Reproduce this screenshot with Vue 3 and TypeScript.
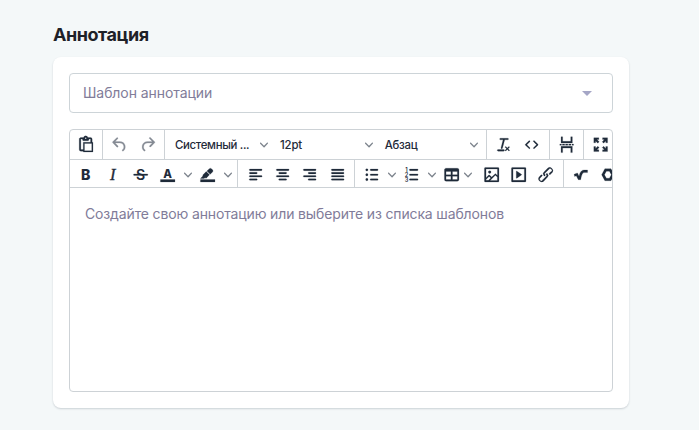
<script setup lang="ts">
interface Tool {
  icon: string
  arrow?: boolean
  muted?: boolean
  compact?: boolean
}

const selects: string[] = ['Системный ...', '12pt', 'Абзац']

const rowTwo: Tool[][] = [
  [{ icon: 'bold' }, { icon: 'italic' }, { icon: 'strike' }, { icon: 'color', arrow: true }, { icon: 'highlight', arrow: true }],
  [{ icon: 'left' }, { icon: 'center' }, { icon: 'right' }, { icon: 'justify' }],
  [
    { icon: 'bullets', arrow: true },
    { icon: 'numbers', arrow: true },
    { icon: 'table', arrow: true, compact: true },
    { icon: 'image' },
    { icon: 'media' },
    { icon: 'link' },
  ],
  [{ icon: 'root' }, { icon: 'chem' }],
]

const rowOneStart: Tool[][] = [[{ icon: 'paste' }], [{ icon: 'undo', muted: true }, { icon: 'redo', muted: true }]]
const rowOneEnd: Tool[][] = [[{ icon: 'clear' }, { icon: 'code' }], [{ icon: 'break' }], [{ icon: 'fullscreen' }]]

const paths: Record<string, string> = {
  paste:
    'M18 9V5h-2v1c0 .6-.4 1-1 1H9a1 1 0 01-1-1V5H6v13h3V9h9zM9 20H6a2 2 0 01-2-2V5c0-1.1.9-2 2-2h3.2A3 3 0 0112 1a3 3 0 012.8 2H18a2 2 0 012 2v4h1v12H9v-1zm1.5-9.5v9h9v-9h-9zM12 3a1 1 0 00-1 1c0 .5.4 1 1 1s1-.5 1-1-.4-1-1-1z',
  undo: 'M6.4 8H12c3.7 0 6.2 2 6.8 5.1.6 2.7-.4 5.6-2.3 6.8a1 1 0 01-1-1.8c1.1-.6 1.8-2.7 1.4-4.6-.5-2.1-2.1-3.5-4.9-3.5H6.4l3.3 3.3a1 1 0 11-1.4 1.4l-5-5a1 1 0 010-1.4l5-5a1 1 0 011.4 1.4L6.4 8z',
  redo: 'M17.6 10H12c-2.8 0-4.4 1.4-4.9 3.5-.4 2 .3 4 1.4 4.6a1 1 0 11-1 1.8c-2-1.2-2.9-4.1-2.3-6.8.6-3 3-5.1 6.8-5.1h5.6l-3.3-3.3a1 1 0 111.4-1.4l5 5a1 1 0 010 1.4l-5 5a1 1 0 01-1.4-1.4l3.3-3.3z',
  code: 'M9.8 15.7c.3.3.3.8 0 1-.3.4-.9.4-1.2 0l-4.4-4.1a.8.8 0 010-1.2l4.4-4.2c.3-.3.9-.3 1.2 0 .3.3.3.8 0 1.1L6 12l3.8 3.7zM14.2 15.7c-.3.3-.3.8 0 1 .4.4.9.4 1.2 0l4.4-4.1c.3-.3.3-.9 0-1.2l-4.4-4.2a.8.8 0 00-1.2 0c-.3.3-.3.8 0 1.1L18 12l-3.8 3.7z',
  clear:
    'M13.2 6a1 1 0 010 .2l-2.6 10a1 1 0 01-1 .8h-.2a.8.8 0 01-.8-1l2.6-10H8a1 1 0 110-2h9a1 1 0 010 2h-3.8zM5 18h7a1 1 0 010 2H5a1 1 0 010-2zm13 1.5L16.5 18 15 19.5a.7.7 0 01-1-1l1.5-1.5-1.5-1.5a.7.7 0 011-1l1.5 1.5 1.5-1.5a.7.7 0 011 1L17.5 17l1.5 1.5a.7.7 0 01-1 1z',
  break:
    'M5 2.2h2v5.6h10V2.2h2v7.8H5zM5 21.8h2v-5.6h10v5.6h2V14H5zM3.5 11.200h2v1.600h-2zM6.700 11.200h2.800v1.600H6.700zM10.600 11.200h2.800v1.600h-2.800zM14.500 11.200h2.800v1.600h-2.800zM18.500 11.200h2v1.600h-2z',
  fullscreen:
    'M3.500 3.500h6.200v2.200H7.400l2.700 2.700-1.700 1.700-2.700-2.700v2.300H3.500zM20.500 3.500v6.200h-2.200V7.400l-2.700 2.700-1.700-1.700 2.700-2.700h-2.300V3.500zM20.500 20.500h-6.200v-2.200h2.300l-2.700-2.700 1.700-1.700 2.700 2.700v-2.300h2.200zM3.500 20.500v-6.200h2.200v2.300l2.700-2.700 1.700 1.700-2.700 2.700h2.300v2.200z',
  strike: 'M4 11h16a1 1 0 010 2H4a1 1 0 010-2z',
  color: 'M3 18h18v3H3z',
  highlight:
    'M3 18h18v3H3zM7.7 16.7H3l3.3-3.3-.7-.8L10.2 8l4 4.1-4 4.2c-.2.2-.6.2-.8 0l-.6-.7-1.1 1.1zm3.300-9.300l3-2.900a2 2 0 012.6 0L18 6c.7.7.7 2 0 2.7l-2.9 2.9z',
  left: 'M5 5h14a1 1 0 010 2H5a1 1 0 110-2zm0 4h8a1 1 0 010 2H5a1 1 0 110-2zm0 8h8a1 1 0 010 2H5a1 1 0 010-2zm0-4h14a1 1 0 010 2H5a1 1 0 010-2z',
  center: 'M5 5h14a1 1 0 010 2H5a1 1 0 110-2zm3 4h8a1 1 0 010 2H8a1 1 0 110-2zm0 8h8a1 1 0 010 2H8a1 1 0 010-2zm-3-4h14a1 1 0 010 2H5a1 1 0 010-2z',
  right: 'M5 5h14a1 1 0 010 2H5a1 1 0 110-2zm6 4h8a1 1 0 010 2h-8a1 1 0 110-2zm0 8h8a1 1 0 010 2h-8a1 1 0 010-2zm-6-4h14a1 1 0 010 2H5a1 1 0 010-2z',
  justify: 'M5 5h14a1 1 0 010 2H5a1 1 0 110-2zm0 4h14a1 1 0 010 2H5a1 1 0 110-2zm0 4h14a1 1 0 010 2H5a1 1 0 010-2zm0 4h14a1 1 0 010 2H5a1 1 0 010-2z',
  bullets:
    'M11 5h8a1 1 0 010 2h-8a1 1 0 010-2zm0 6h8a1 1 0 010 2h-8a1 1 0 010-2zm0 6h8a1 1 0 010 2h-8a1 1 0 010-2zM4.5 6a1.5 1.5 0 113 0 1.5 1.5 0 01-3 0zm0 6a1.5 1.5 0 113 0 1.5 1.5 0 01-3 0zm0 6a1.5 1.5 0 113 0 1.5 1.5 0 01-3 0z',
  numbers: 'M10 5h9a1 1 0 010 2h-9a1 1 0 010-2zm0 6h9a1 1 0 010 2h-9a1 1 0 010-2zm0 6h9a1 1 0 010 2h-9a1 1 0 010-2z',
  table: 'M19 4a2 2 0 012 2v12a2 2 0 01-2 2H5a2 2 0 01-2-2V6c0-1.1.9-2 2-2h14zM5 14v4h6v-4H5zm14 0h-6v4h6v-4zm0-6h-6v4h6V8zM5 12h6V8H5v4z',
  image:
    'M5 15.7l3.3-3.2c.3-.3.7-.3 1 0L12 15l4.1-4c.3-.4.8-.4 1 0l2 1.9V5H5v10.7zM5 18V19h3l2.8-2.9-2-2L5 17.9zm14-3l-2.5-2.4-6.4 6.5H19v-4zM4 3h16c.6 0 1 .4 1 1v16c0 .6-.4 1-1 1H4a1 1 0 01-1-1V4c0-.6.4-1 1-1zm5.5 7.5a1.7 1.7 0 100-3.4 1.7 1.7 0 000 3.4z',
  media:
    'M4 3h16c.6 0 1 .4 1 1v16c0 .6-.4 1-1 1H4a1 1 0 01-1-1V4c0-.6.4-1 1-1zm1 2v14h14V5H5zm4.8 2.6l5.6 4a.5.5 0 010 .8l-5.6 4A.5.5 0 019 16V8a.5.5 0 01.8-.4z',
  link: 'M6.2 12.3a1 1 0 011.4 1.4l-2.1 2a2 2 0 102.7 2.8l4.8-4.8a1 1 0 000-1.4 1 1 0 111.4-1.3 2.9 2.9 0 010 4L9.6 20a3.9 3.9 0 01-5.5-5.5l2-2zm11.6-.6a1 1 0 01-1.4-1.4l2-2a2 2 0 10-2.6-2.8L11 10.3a1 1 0 000 1.4A1 1 0 119.6 13a2.9 2.9 0 010-4L14.4 4a3.9 3.9 0 015.500 5.500l-2 2z',
  root: 'M3.800 11.500L8 9.800l2 4.200C11 9 12.800 6.200 16 6.200h4.500v3.200h-4c-2.300 0-3.300 3.200-4.500 8.800H9l-2.500-4.800-2 .8z',
  chem: 'M8.500 4.500h7.500L20.500 12 16 19.500H8.500L4.500 12zM10.400 7.700L8 12l2.400 4.300h3.700L16.500 12l-2.400-4.300z',
}

const letters: Record<string, string> = { bold: 'B', italic: 'I', strike: 'S', color: 'A' }
const chevron = 'M8.7 2.2c.3-.3.8-.3 1 0 .4.4.4.9 0 1.2L5.7 7.8c-.3.3-.9.3-1.2 0L.2 3.4a.8.8 0 010-1.2c.3-.3.8-.3 1.1 0L5 6l3.7-3.8z'
</script>

<template>
  <main class="page">
    <h2 class="title">Аннотация</h2>
    <section class="card">
      <div class="template-select">
        <span>Шаблон аннотации</span>
        <i class="caret"></i>
      </div>
      <div class="editor">
        <div class="row first">
          <div v-for="(group, g) in rowOneStart" :key="g" class="group">
            <span v-for="tool in group" :key="tool.icon" class="tool" :class="{ muted: tool.muted }">
              <svg viewBox="0 0 24 24" class="icon"><path :d="paths[tool.icon]" fill-rule="evenodd" /></svg>
            </span>
          </div>
          <div class="group selects">
            <span v-for="label in selects" :key="label" class="select">
              {{ label }}
              <svg viewBox="0 0 10 10" class="chevron"><path :d="chevron" /></svg>
            </span>
          </div>
          <div v-for="(group, g) in rowOneEnd" :key="'e' + g" class="group">
            <span v-for="tool in group" :key="tool.icon" class="tool">
              <svg viewBox="0 0 24 24" class="icon"><path :d="paths[tool.icon]" /></svg>
            </span>
          </div>
        </div>
        <div class="row second">
          <div v-for="(group, g) in rowTwo" :key="g" class="group">
            <template v-for="tool in group" :key="tool.icon">
              <span class="tool">
                <svg viewBox="0 0 24 24" class="icon">
                  <path v-if="paths[tool.icon]" :d="paths[tool.icon]" fill-rule="evenodd" />
                  <text v-if="letters[tool.icon]" x="12" :y="tool.icon === 'color' ? 15.7 : 18.3" :class="tool.icon">{{ letters[tool.icon] }}</text>
                  <g v-if="tool.icon === 'numbers'" class="digits">
                    <text x="5.5" y="8.5">1</text>
                    <text x="5.5" y="14.7">2</text>
                    <text x="5.5" y="21">3</text>
                  </g>
                </svg>
              </span>
              <span v-if="tool.arrow" class="arrow" :class="{ compact: tool.compact }">
                <svg viewBox="0 0 10 10" class="chevron"><path :d="chevron" /></svg>
              </span>
            </template>
          </div>
        </div>
        <div class="content">Создайте свою аннотацию или выберите из списка шаблонов</div>
      </div>
    </section>
  </main>
</template>

<style>
body {
  background: #f4f8f9;
}
</style>

<style scoped>
.page {
  box-sizing: border-box;
  height: 430px;
  padding: 22px 70px 0 53px;
  font-family: Inter, "Liberation Sans", sans-serif;
  background: #f4f8f9;
}
.title {
  margin: 0 0 10px;
  font-size: 18px;
  line-height: 25px;
  font-weight: 700;
  letter-spacing: -0.45px;
  color: #1e2128;
}
.card {
  box-sizing: border-box;
  width: 576px;
  height: 351px;
  padding: 16px;
  border-radius: 8px;
  background: #fff;
  box-shadow: 0 1px 2px rgba(40, 55, 70, 0.2);
}
.template-select {
  box-sizing: border-box;
  display: flex;
  align-items: center;
  justify-content: space-between;
  height: 40px;
  padding: 0 20px 0 13px;
  border: 1px solid #cdd4d8;
  border-radius: 4px;
  font-size: 14px;
  line-height: 18px;
  letter-spacing: -0.07px;
  color: #817c99;
}
.template-select span {
  padding-bottom: 1px;
}
.caret {
  border: 5px solid transparent;
  border-top-color: #a5a6c6;
  border-bottom: 0;
}
.editor {
  box-sizing: border-box;
  display: flex;
  flex-direction: column;
  width: 544px;
  height: 263px;
  margin-top: 16px;
  border: 1px solid #cdd2d6;
  border-radius: 4px;
  overflow: hidden;
}
.row {
  display: flex;
  flex: none;
  box-sizing: border-box;
  border-bottom: 1px solid #cdd2d6;
  color: #1f2b3a;
}
.first {
  height: 30px;
}
.second {
  height: 28px;
}
.group {
  display: flex;
  flex: none;
  align-items: center;
  box-sizing: border-box;
  padding: 0 2.5px;
  border-right: 1px solid #cdd2d6;
}
.first .group:first-child {
  padding: 0 3px 0 2px;
}
.first .group:nth-child(4) {
  padding: 0 3.2px 0 2px;
}
.first .group:nth-child(5) {
  padding: 0 3px;
}
.group:last-child,
.first .group:last-child {
  padding-left: 3px;
  border-right: 0;
}
.second .group {
  padding: 2px 3.1px 0;
}
.second .group:first-child {
  padding: 2px 3.3px 0 2px;
}
.tool {
  display: flex;
  flex: none;
  justify-content: center;
  width: 27.4px;
}
.first .group:nth-child(2) .tool,
.first .group:nth-child(4) .tool {
  width: 28px;
}
.icon {
  width: 19.4px;
  height: 19.4px;
  fill: currentColor;
}
.icon path {
  stroke: currentColor;
  stroke-width: 0.25;
}
.muted {
  color: #858b94;
}
.selects {
  width: 322px;
  padding: 0 0 0 9.5px;
}
.select {
  display: flex;
  align-items: center;
  justify-content: space-between;
  box-sizing: border-box;
  width: 92.8px;
  margin-right: 12.2px;
  font-size: 11.4px;
  font-weight: 450;
  letter-spacing: -0.32px;
  white-space: nowrap;
}
.select:nth-child(2) {
  letter-spacing: -0.1px;
}
.select:last-child {
  margin-right: 0;
}
.chevron {
  flex: none;
  width: 8px;
  height: 8px;
  fill: #7d848d;
}
.arrow {
  display: flex;
  flex: none;
  justify-content: center;
  width: 12.6px;
}
.compact {
  width: 5.4px;
  margin-right: 6.6px;
}
text {
  text-anchor: middle;
  font-family: Inter, sans-serif;
}
.bold {
  font-size: 17.5px;
  font-weight: 800;
}
.italic {
  font-family: "Liberation Serif", serif;
  font-size: 20.5px;
  font-style: italic;
  stroke: currentColor;
  stroke-width: 0.4;
}
.strike {
  font-size: 17.5px;
  font-weight: 600;
}
.color {
  font-size: 14px;
  font-weight: 800;
}
.digits text {
  font-size: 7px;
  font-weight: 600;
}
.content {
  padding: 17px 15px;
  font-size: 14px;
  line-height: 17px;
  letter-spacing: -0.14px;
  color: #817c99;
}
</style>
